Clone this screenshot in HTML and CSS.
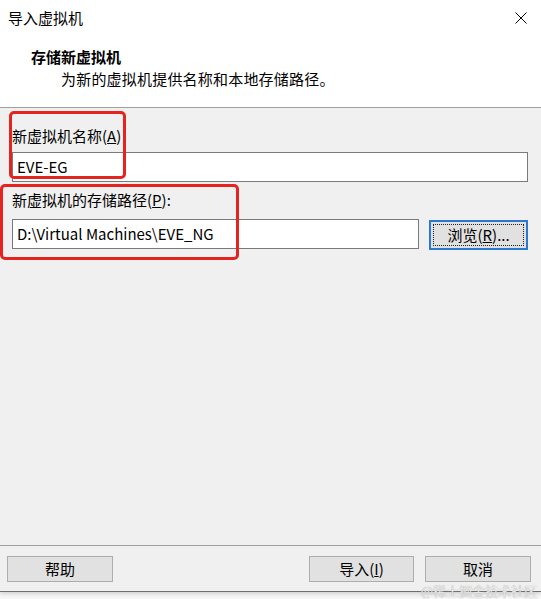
FILE: index.html
```html
<!DOCTYPE html>
<html lang="zh-CN">
<head>
<meta charset="utf-8">
<title>导入虚拟机</title>
<link rel="stylesheet" href="styles.css">
</head>
<body>
<div class="dialog">
  <div class="header">
    <div class="titlebar">
      <span class="title">导入虚拟机</span>
      <svg class="close" width="12" height="12" viewBox="0 0 12 12"><path d="M0.5 0.5L11.5 11.5M11.5 0.5L0.5 11.5" stroke="#000" stroke-width="1" fill="none"/></svg>
    </div>
    <div class="heading">存储新虚拟机</div>
    <div class="subtitle">为新的虚拟机提供名称和本地存储路径。</div>
  </div>
  <div class="content">
    <div class="label first">新虚拟机名称(<u>A</u>)</div>
    <div class="input full">EVE-EG</div>
    <div class="label second">新虚拟机的存储路径(<u>P</u>):</div>
    <div class="row">
      <div class="input path">D:\Virtual Machines\EVE_NG</div>
      <div class="button browse"><span class="focus">浏览(<u>R</u>)...</span></div>
    </div>
    <div class="mark mark1"></div>
    <div class="mark mark2"></div>
  </div>
  <div class="footer">
    <div class="button">帮助</div>
    <div class="spacer"></div>
    <div class="button">导入(<u>I</u>)</div>
    <div class="button">取消</div>
  </div>
</div>
<div class="watermark">@稀土掘金技术社区</div>
</body>
</html>
```
FILE: styles.css
```css
* { box-sizing: border-box; }
html, body { margin: 0; padding: 0; }
body {
  width: 541px;
  height: 599px;
  background: #f6f6f6;
  font-family: "Noto Sans CJK SC", "Noto Sans", sans-serif;
  font-size: 15px;
  color: #000;
  position: relative;
  overflow: hidden;
}
.dialog {
  height: 592px;
  display: flex;
  flex-direction: column;
  background: #f0f0f0;
  border-bottom: 1px solid #6e6e6e;
  box-shadow: 0 2px 4px rgba(0,0,0,0.15);
}
.header {
  height: 108px;
  background: #fff;
  border-bottom: 1px solid #a0a0a0;
}
.titlebar {
  height: 36px;
  display: flex;
  align-items: center;
  justify-content: space-between;
  padding: 0 14px 0 8px;
}
.title { line-height: 20px; }
.close { display: block; }
.heading {
  margin-top: 11px;
  padding-left: 31px;
  font-weight: bold;
  line-height: 20px;
}
.subtitle {
  margin-top: 2px;
  padding-left: 61px;
  line-height: 20px;
  letter-spacing: 0.2px;
}
.content {
  flex: 1;
  position: relative;
  padding: 18px 13px 0 12px;
}
.label { line-height: 20px; }
.label.first { margin-bottom: 6px; }
.label.second { margin-top: 8px; margin-bottom: 8px; }
.input {
  height: 30px;
  background: #fff;
  border: 1px solid #7a7a7a;
  padding-left: 4px;
  display: flex;
  align-items: center;
  line-height: 20px;
}
.row {
  display: flex;
  align-items: center;
  gap: 10px;
}
.input.path { width: 408px; }
.button {
  height: 26px;
  width: 106px;
  background: #e1e1e1;
  border: 1px solid #adadad;
  display: flex;
  align-items: center;
  justify-content: center;
  line-height: 20px;
}
.button.browse {
  width: 99px;
  height: 30px;
  margin-top: 2px;
  border: 2px solid #2a78cf;
  padding: 2px;
}
.focus {
  flex: 1;
  align-self: stretch;
  border: 1px dotted #222;
  display: flex;
  align-items: center;
  justify-content: center;
}
.mark {
  position: absolute;
  border: 3px solid #e5241f;
  border-radius: 5px;
}
.mark1 { left: 9px; top: 3px; width: 117px; height: 68px; }
.mark2 { left: 0; top: 76px; width: 239px; height: 76px; }
.footer {
  height: 46px;
  border-top: 1px solid #a0a0a0;
  display: flex;
  padding: 10px 10px 0 7px;
  gap: 11px;
}
.spacer { flex: 1; }
.footer .button:nth-child(3) { width: 105px; }
.watermark {
  position: absolute;
  right: 4px;
  bottom: 1px;
  font-size: 13px;
  line-height: 14px;
  color: #e8e8e8;
  text-shadow: 0 0 1px #9a9a9a;
}
```
